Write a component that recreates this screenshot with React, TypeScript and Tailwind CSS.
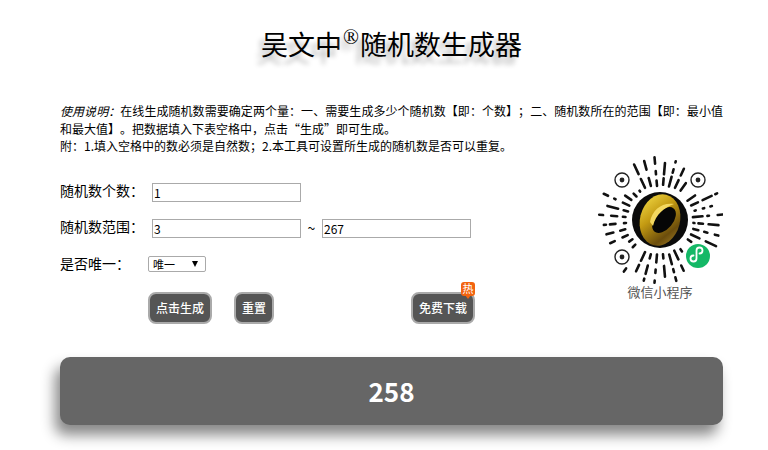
const cjk = "font-['Noto_Sans_CJK_SC','Liberation_Sans',sans-serif]";

// pseudo random but stable, so the code drawing keeps its pattern
const rnd = (n: number) => {
  const v = Math.sin(n * 127.1) * 43758.5453;
  return v - Math.floor(v);
};

const eyes = [
  [32, 30],
  [108, 30],
  [32, 107],
];

function spokes() {
  const out: { x1: number; y1: number; x2: number; y2: number; w: number }[] = [];
  const cx = 70;
  const cy = 70;
  for (let i = 0; i < 36; i++) {
    const a = ((i + 0.5) / 36) * Math.PI * 2;
    let r = 33 + rnd(i + 50) * 3;
    let k = 0;
    while (r < 61) {
      const len = 1 + rnd(i * 7 + k) * 11;
      const end = Math.min(r + len, 63);
      const x1 = cx + Math.cos(a) * r;
      const y1 = cy + Math.sin(a) * r;
      const x2 = cx + Math.cos(a) * end;
      const y2 = cy + Math.sin(a) * end;
      const nearEye = eyes.some(([ex, ey]) => Math.hypot(x2 - ex, y2 - ey) < 12 || Math.hypot(x1 - ex, y1 - ey) < 12);
      const nearLogo = Math.hypot(x2 - 108, y2 - 106) < 15 || Math.hypot(x1 - 108, y1 - 106) < 15;
      if (!nearEye && !nearLogo) out.push({ x1, y1, x2, y2, w: 2.6 });
      r = end + 4 + rnd(i * 13 + k) * 5;
      k++;
    }
  }
  return out;
}

function MiniCode() {
  return (
    <svg width="126" height="134" viewBox="7 5 126 134">
      <defs>
        <linearGradient id="gold" x1="0" y1="0" x2="1" y2="1">
          <stop offset="0" stopColor="#f7e04a" />
          <stop offset="0.4" stopColor="#c39a12" />
          <stop offset="0.75" stopColor="#6b4d0c" />
          <stop offset="1" stopColor="#a9852a" />
        </linearGradient>
      </defs>
      <g stroke="#111" strokeLinecap="round">
        {spokes().map((s, i) => (
          <line key={i} x1={s.x1} y1={s.y1} x2={s.x2} y2={s.y2} strokeWidth={s.w} />
        ))}
      </g>
      {eyes.map(([x, y]) => (
        <g key={x * y}>
          <circle cx={x} cy={y} r="7" fill="none" stroke="#222" strokeWidth="1.4" />
          <circle cx={x} cy={y} r="2.4" fill="#222" />
        </g>
      ))}
      <circle cx="70" cy="70" r="28" fill="#0b0b0b" />
      <ellipse cx="70" cy="70" rx="20" ry="26" transform="rotate(14 70 70)" fill="url(#gold)" />
      <ellipse cx="74" cy="70" rx="9" ry="15" transform="rotate(40 74 70)" fill="#060606" />
      <path d="M60 72 C 62 60, 72 52, 84 54 C 74 58, 66 64, 63 76 Z" fill="#f3d860" />
      <circle cx="108" cy="106" r="12" fill="#14b866" />
      <path
        d="M103 107 a3 3 0 1 0 3 3 v-8 a3 3 0 1 1 3 3"
        transform="translate(0.5 -1.5)"
        fill="none"
        stroke="#fff"
        strokeWidth="1.8"
        strokeLinecap="round"
      />
    </svg>
  );
}

function Btn({ label, className = "" }: { label: string; className?: string }) {
  return (
    <button
      className={`h-[32px] rounded-lg border-2 border-[#aaa] bg-[#555] text-[12px] font-medium text-white ${className}`}
    >
      {label}
    </button>
  );
}

function Field({ value, className = "" }: { value: string; className?: string }) {
  return (
    <input
      readOnly
      value={value}
      className={`h-[19px] w-[149px] border border-[#aaa] px-[1px] text-[12px] text-black outline-none ${className}`}
    />
  );
}

export default function App() {
  return (
    <div className={`h-[450px] w-[768px] overflow-hidden bg-white pr-[45px] pl-[60px] text-black [text-spacing-trim:space-all] ${cjk}`}>
      <h1 className="flex h-[88px] items-start justify-center pt-[24px] text-[27px] leading-[40px] font-normal [text-shadow:-5px_7px_5px_#bbb]">
        吴文中<span className="relative -top-[7px] mx-[1px] font-['Liberation_Serif',serif] text-[21px]">®</span>
        随机数生成器
      </h1>

      <p className="mt-[14px] text-justify text-[12px] leading-[17.5px]">
        <em>使用说明&#xFF1A;</em>在线生成随机数需要确定两个量&#xFF1A;一、需要生成多少个随机数【即&#xFF1A;个数】&#xFF1B;二、随机数所在的范围【即&#xFF1A;最小值和最大值】。把数据填入下表空格中&#xFF0C;点击“生成”即可生成。
        <br />
        附&#xFF1A;1.填入空格中的数必须是自然数&#xFF1B;2.本工具可设置所生成的随机数是否可以重复。
      </p>

      <div className="flex">
        <div className="flex-1">
          <div className="mt-[28px] flex h-[19px] items-center text-[14px]">
            <span className="mb-[3px] w-[92px]">随机数个数&#xFF1A;</span>
            <Field value="1" />
          </div>
          <div className="mt-[17px] flex h-[19px] items-center text-[14px]">
            <span className="mb-[3px] w-[92px]">随机数范围&#xFF1A;</span>
            <Field value="3" />
            <span className="w-[21px] text-center text-[14px]">~</span>
            <Field value="267" />
          </div>
          <div className="mt-[17px] flex h-[19px] items-center text-[14px]">
            <span className="mb-[2px] w-[88px]">是否唯一&#xFF1A;</span>
            <div className="relative flex h-[16px] w-[58px] items-center rounded-[2px] border border-[#aaa] pl-[4px] text-[11px]">
              唯一
              <span className="absolute top-[4px] right-[7px] h-0 w-0 border-x-[3px] border-t-[6px] border-x-transparent border-t-black" />
            </div>
          </div>
          <div className="mt-[18px] flex pl-[88px]">
            <Btn label="点击生成" className="w-[64px]" />
            <Btn label="重置" className="ml-[22px] w-[40px]" />
            <div className="relative ml-[137px]">
              <Btn label="免费下载" className="w-[64px]" />
              <span className="absolute -top-[10px] right-0 flex h-[14px] w-[14px] items-center justify-center rounded-[3px] bg-[#f2640f] text-[11px] leading-none text-white">
                热
                <span className="absolute -bottom-[3px] left-[4px] h-0 w-0 border-x-[3px] border-t-[4px] border-x-transparent border-t-[#f2640f]" />
              </span>
            </div>
          </div>
        </div>
        <div className="flex w-[126px] shrink-0 flex-col items-center">
          <MiniCode />
          <span className="mt-[-7px] text-[13px] text-[#555]">微信小程序</span>
        </div>
      </div>

      <div className="mt-[33px] flex h-[68px] items-center justify-center rounded-[10px] bg-[#666] text-[26px] font-bold text-white shadow-[-5px_10px_14px_#888]">
        258
      </div>
    </div>
  );
}
